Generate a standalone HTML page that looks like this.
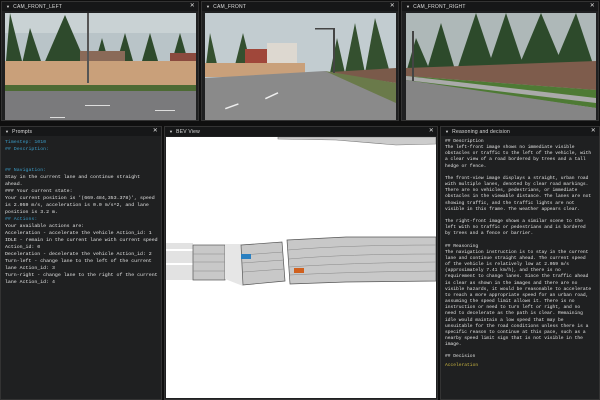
<!DOCTYPE html><html><head><style>
*{margin:0;padding:0;box-sizing:border-box}
body{width:600px;height:400px;background:#0f0f0f;position:relative;overflow:hidden;font-family:"Liberation Mono",monospace}
.w{position:absolute;background:#1f2021;border:1px solid #333}
.t{height:9px;background:#161718;color:#ddd;font:5px/9px "Liberation Sans",sans-serif;padding-left:4px;position:relative;letter-spacing:.2px}
.t:before{content:"\25BC";font-size:4px;margin-right:3px}
.t i{position:absolute;right:3px;top:0;font-style:normal;font-size:6px}
.c{font-size:4.9px;line-height:7px;color:#e2e2e2;white-space:pre;padding:3px 4px}
.h{color:#3a9bc6}
.y{color:#c8b440}
svg{display:block}
</style></head><body>
<div class="w" style="left:1px;top:1px;width:198px;height:120px"><div class="t">CAM_FRONT_LEFT<i>✕</i></div>
<svg style="position:absolute;left:3px;top:11px" width="191" height="107"><rect width="191" height="107" fill="#b9c4c8"/><rect y="0" width="191" height="20" fill="#c9d2d4"/>
<g fill="#2e4a2c"><polygon points="35,60 60,2 85,60"/><polygon points="15,60 25,15 40,60"/><polygon points="0,60 5,0 20,60"/><polygon points="110,55 120,20 130,55"/><polygon points="135,55 145,20 155,55"/><polygon points="165,55 175,20 185,55"/><polygon points="90,50 97,25 104,50"/></g>
<rect x="75" y="38" width="45" height="20" fill="#8a6a58"/><rect x="165" y="40" width="26" height="18" fill="#8a4a3e"/>
<rect x="0" y="48" width="191" height="26" fill="#c9a07a"/><rect x="0" y="72" width="191" height="6" fill="#4d6a34"/>
<rect x="0" y="78" width="191" height="29" fill="#7a7a7c"/><rect x="82" y="0" width="2" height="70" fill="#555"/>
<rect x="80" y="92" width="25" height="1" fill="#ddd"/><rect x="150" y="97" width="20" height="1" fill="#ddd"/><rect x="45" y="104" width="15" height="1" fill="#ddd"/></svg></div>
<div class="w" style="left:201px;top:1px;width:198px;height:120px"><div class="t">CAM_FRONT<i>✕</i></div>
<svg style="position:absolute;left:3px;top:11px" width="191" height="107"><rect width="191" height="107" fill="#c2ccd0"/>
<g fill="#34502f"><polygon points="28,60 38,20 48,60"/><polygon points="0,60 5,20 14,60"/><polygon points="140,60 150,10 160,60"/><polygon points="160,60 170,5 185,60"/><polygon points="125,60 132,25 140,60"/></g>
<rect x="40" y="36" width="30" height="24" fill="#a0473a"/><rect x="62" y="30" width="30" height="30" fill="#ddd8d0"/>
<rect x="0" y="50" width="100" height="14" fill="#c9a07a"/><polygon points="110,60 191,55 191,70 125,60" fill="#7a5a4a"/>
<polygon points="0,65 120,58 191,75 191,107 0,107" fill="#8a8a8a"/><polygon points="120,58 191,70 191,90" fill="#6a7a4a"/>
<rect x="128" y="15" width="2" height="45" fill="#444"/><rect x="110" y="15" width="18" height="1.5" fill="#444"/>
<rect x="60" y="85" width="14" height="1.5" fill="#eee" transform="rotate(-25 60 85)"/><rect x="20" y="95" width="14" height="1.5" fill="#eee" transform="rotate(-20 20 95)"/></svg></div>
<div class="w" style="left:401px;top:1px;width:198px;height:120px"><div class="t">CAM_FRONT_RIGHT<i>✕</i></div>
<svg style="position:absolute;left:4px;top:11px" width="190" height="107"><rect width="190" height="107" fill="#aeb8b8"/>
<g fill="#2d4a2b"><polygon points="20,60 35,10 50,60"/><polygon points="50,60 70,0 90,60"/><polygon points="80,60 100,0 120,60"/><polygon points="110,60 135,0 160,60"/><polygon points="145,60 170,0 190,60"/><polygon points="0,60 10,25 25,60"/></g>
<polygon points="0,55 190,48 190,77 0,63" fill="#7e5c4c"/><polygon points="0,63 190,77 190,95 0,68" fill="#4e7a34"/>
<polygon points="0,63 190,85 190,90 0,67" fill="#aaa"/><polygon points="0,67 190,95 190,107 0,107" fill="#858585"/>
<rect x="6" y="18" width="2" height="50" fill="#444"/></svg></div>
<div class="w" style="left:0;top:126px;width:162px;height:274px"><div class="t">Prompts<i>✕</i></div>
<div class="c" style="padding-top:3px"><span class="h">Timestep: 1010
## Description:


## Navigation:</span>
<span style="display:inline-block;margin-top:2px"></span>Stay in the current lane and continue straight
ahead.
### Your current state:
Your current position is '(669.484,353.378)', speed
is 2.059 m/s, acceleration is 0.0 m/s^2, and lane
position is 3.2 m.
<span class="h">## Actions:</span>
Your available actions are:
Acceleration - accelerate the vehicle Action_id: 1
IDLE - remain in the current lane with current speed
Action_id: 0
Deceleration - decelerate the vehicle Action_id: 2
Turn-left - change lane to the left of the current
lane Action_id: 3
Turn-right - change lane to the right of the current
lane Action_id: 4</div></div>
<div class="w" style="left:164px;top:126px;width:274px;height:274px"><div class="t">BEV View<i>✕</i></div>
<svg style="position:absolute;left:1px;top:10px" width="270" height="261"><rect width="270" height="261" fill="#fff"/>
<polygon points="112,0 270,0 270,7 230,8 170,3 112,2" fill="#ccc" stroke="#777" stroke-width=".6"/>
<g transform="translate(0,-6)">
<rect x="0" y="112" width="27" height="37" fill="#e2e2e2"/><rect x="0" y="118" width="27" height="2" fill="#fff"/><rect x="0" y="132" width="27" height="2" fill="#fff"/>
<rect x="27" y="114" width="32" height="35" fill="#c8c8c8" stroke="#555" stroke-width=".7"/>
<g stroke="#888" stroke-width=".5"><line x1="27" y1="123" x2="59" y2="123"/><line x1="27" y1="131" x2="59" y2="131"/><line x1="27" y1="140" x2="59" y2="140"/></g>
<polygon points="59,113 75,113 77,155 59,148" fill="#e6e6e6"/>
<polygon points="75,114 116,111 119,150 77,154" fill="#c8c8c8" stroke="#555" stroke-width=".7"/>
<polygon points="121,109 180,106 270,106 270,150 180,151 124,153" fill="#c8c8c8" stroke="#555" stroke-width=".7"/>
<g stroke="#888" stroke-width=".5" fill="none"><path d="M76,124 L117,121 M76,132 L118,129 M77,141 L118,138 M122,119 Q180,114 270,114 M123,128 Q180,123 270,123 M123,136 Q180,132 270,131 M124,144 Q180,141 270,140"/></g>
<rect x="75" y="123" width="10" height="5" fill="#2a7fc0"/><rect x="128" y="137" width="10" height="5" fill="#d0601e"/></g></svg></div>
<div class="w" style="left:440px;top:126px;width:160px;height:274px"><div class="t">Reasoning and decision<i>✕</i></div>
<div class="c" style="font-size:4.6px;line-height:6.15px">## Description
The left-front image shows no immediate visible
obstacles or traffic to the left of the vehicle, with
a clear view of a road bordered by trees and a tall
hedge or fence.

The front-view image displays a straight, urban road
with multiple lanes, denoted by clear road markings.
There are no vehicles, pedestrians, or immediate
obstacles in the viewable distance. The lanes are not
showing traffic, and the traffic lights are not
visible in this frame. The weather appears clear.

The right-front image shows a similar scene to the
left with no traffic or pedestrians and is bordered
by trees and a fence or barrier.

## Reasoning
The navigation instruction is to stay in the current
lane and continue straight ahead. The current speed
of the vehicle is relatively low at 2.059 m/s
(approximately 7.41 km/h), and there is no
requirement to change lanes. Since the traffic ahead
is clear as shown in the images and there are no
visible hazards, it would be reasonable to accelerate
to reach a more appropriate speed for an urban road,
assuming the speed limit allows it. There is no
instruction or need to turn left or right, and no
need to decelerate as the path is clear. Remaining
idle would maintain a low speed that may be
unsuitable for the road conditions unless there is a
specific reason to continue at this pace, such as a
nearby speed limit sign that is not visible in the
image.

## Decision
<span class="y" style="display:inline-block;margin-top:2px">Acceleration</span></div></div>
</body></html>
